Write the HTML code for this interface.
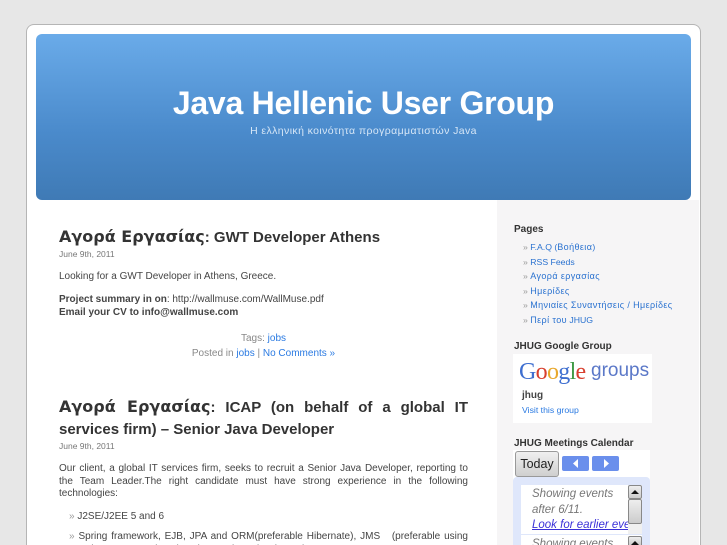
<!DOCTYPE html>
<html><head><meta charset="utf-8"><style>
html,body{margin:0;padding:0;width:727px;height:545px;overflow:hidden;background:#e7e7e7;font-family:"Liberation Sans","DejaVu Sans",sans-serif;color:#333}
a{color:#2a7ae2;text-decoration:none}
#wrap{position:relative;width:727px;height:545px;overflow:hidden;background:#e7e7e7}
.a{position:absolute;white-space:nowrap}
#page{position:absolute;left:26px;top:24px;width:673px;height:521px;background:#fff;border:1px solid #b5b5b5;border-bottom:0;border-radius:8px 8px 0 0;box-sizing:content-box;overflow:hidden}
#side{position:absolute;left:497px;top:200px;width:202px;height:345px;background:#f6f5f6}
#hdr{position:absolute;left:36px;top:34px;width:655px;height:166px;border-radius:6px;background:linear-gradient(#6aabe9,#4a8acb 60%,#3f7ab5);border-top:0}
h1{position:absolute;left:0;width:655px;top:50px;margin:0;text-align:center;color:#fff;font-size:32px;line-height:38px;font-weight:bold;letter-spacing:-.27px}
.desc{position:absolute;left:0;width:655px;top:90px;text-align:center;color:#d6e6f6;font-size:10.5px;line-height:14px;letter-spacing:.4px}
h2{position:absolute;margin:0;left:59px;width:409px;font-size:15px;line-height:22px;font-weight:bold;color:#333;text-align:justify}
.g{font-family:"DejaVu Sans",sans-serif;font-size:16px}
.date{font-size:8.5px;line-height:10px;color:#777;left:59px}
.t{font-size:10px;line-height:12px;color:#444;left:59px}
.c{left:59px;width:409px;text-align:center;font-size:10px;line-height:14px;color:#888}
.j{position:absolute;left:59px;width:409px;font-size:10px;line-height:12.5px;color:#444;text-align:justify;overflow:hidden}
.sh{font-size:10px;line-height:12px;font-weight:bold;color:#333;left:514px}
.li{font-size:8.7px;line-height:12px;left:523px;color:#999}
.li a{color:#2a72d0}
.li .e{letter-spacing:.4px;font-size:9px}
</style></head><body><div id="wrap">
<div id="page"></div>
<div id="side"></div>
<div id="hdr"><h1>Java Hellenic User Group</h1><div class="desc">Η ελληνική κοινότητα προγραμματιστών Java</div></div>

<h2 style="top:226px"><span class="g">Αγορά Εργασίας</span>: GWT Developer Athens</h2>
<div class="a date" style="top:249px">June 9th, 2011</div>
<div class="a t" style="top:271px">Looking for a GWT Developer in Athens, Greece.</div>
<div class="a t" style="top:294px"><b>Project summary in on</b>: http://wallmuse.com/WallMuse.pdf</div>
<div class="a t" style="top:307px"><b>Email your CV to info@wallmuse.com</b></div>
<div class="a c" style="top:332px">Tags: <a href="#">jobs</a></div>
<div class="a c" style="top:347px">Posted in <a href="#">jobs</a> | <a href="#">No Comments »</a></div>

<h2 style="top:396px"><span class="g">Αγορά Εργασίας</span>: ICAP (on behalf of a global IT services firm) – Senior Java Developer</h2>
<div class="a date" style="top:441px">June 9th, 2011</div>
<div class="j" style="top:463px">Our client, a global IT services firm, seeks to recruit a Senior Java Developer, reporting to the Team Leader.The right candidate must have strong experience in the following technologies:</div>
<div class="a t" style="top:511px;left:69px"><span style="color:#999">»</span> J2SE/J2EE 5 and 6</div>
<div class="j" style="top:531px;left:69px;width:399px;height:14px"><span style="color:#999">»</span> Spring framework, EJB, JPA and ORM(preferable Hibernate), JMS &nbsp; (preferable using AMQ), JTA, SOAP (WS*) and REST-based web services</div>

<div class="a sh" style="top:224px">Pages</div>
<div class="a li" style="top:241px">» <a href="#">F.A.Q (<span class="e">Βοήθεια</span>)</a></div>
<div class="a li" style="top:256px">» <a href="#">RSS Feeds</a></div>
<div class="a li" style="top:270px">» <a href="#"><span class="e">Αγορά εργασίας</span></a></div>
<div class="a li" style="top:285px">» <a href="#"><span class="e">Ημερίδες</span></a></div>
<div class="a li" style="top:299px">» <a href="#"><span class="e">Μηνιαίες Συναντήσεις / Ημερίδες</span></a></div>
<div class="a li" style="top:314px">» <a href="#"><span class="e">Περί του</span> JHUG</a></div>

<div class="a sh" style="top:341px">JHUG Google Group</div>
<div class="a" style="left:513px;top:354px;width:139px;height:69px;background:#fff"></div>
<div class="a" style="left:519px;top:354px;font-family:'Liberation Serif',serif;font-size:24px;line-height:36px;letter-spacing:-.7px"><span style="color:#3f6fd0">G</span><span style="color:#d8402f">o</span><span style="color:#e8a82c">o</span><span style="color:#3f6fd0">g</span><span style="color:#3f9a45">l</span><span style="color:#d8402f">e</span></div>
<div class="a" style="left:591px;top:359px;font-size:19px;line-height:24px;color:#5b78c8">groups</div>
<div class="a" style="left:522px;top:390px;font-size:10px;line-height:12px;font-weight:bold;color:#444">jhug</div>
<div class="a" style="left:522px;top:404px;font-size:8.7px;line-height:12px;color:#2a7ae2">Visit this group</div>

<div class="a sh" style="top:438px">JHUG Meetings Calendar</div>
<div class="a" style="left:513px;top:450px;width:137px;height:95px;background:#fff"></div>
<div class="a" style="left:515px;top:451px;width:42px;height:24px;background:linear-gradient(#f0f0f0,#cfcfcf);border:1px solid #999;border-radius:3px;font-size:12.5px;line-height:24px;text-align:center;color:#222">Today</div>
<div class="a" style="left:562px;top:456px;width:27px;height:15px;background:#6a8fec;border-radius:2px"><svg width="27" height="15" style="display:block"><path d="M16 3L11 7.5L16 12Z" fill="#fff"/></svg></div>
<div class="a" style="left:592px;top:456px;width:27px;height:15px;background:#6a8fec;border-radius:2px"><svg width="27" height="15" style="display:block"><path d="M12 3L17 7.5L12 12Z" fill="#fff"/></svg></div>
<div class="a" style="left:513px;top:477px;width:137px;height:68px;background:#dfe7fb;border-radius:4px 4px 0 0"></div>
<div class="a" style="left:521px;top:485px;width:121px;height:49px;background:#fff;overflow:hidden;font-size:11.5px;line-height:15.5px;font-style:italic;color:#777;padding:2px 0 0 11px;box-sizing:border-box">Showing events<br>after 6/11.<br><a href="#" style="color:#3a30d8;text-decoration:underline">Look for earlier eve</a></div>
<div class="a" style="left:521px;top:535px;width:121px;height:10px;background:#fff;overflow:hidden;font-size:11.5px;line-height:15.5px;font-style:italic;color:#777;padding:2px 0 0 11px;box-sizing:border-box">Showing events</div>
<div class="a" style="left:628px;top:485px;width:14px;height:14px;background:linear-gradient(#eee,#ccc);border:1px solid #888;border-radius:2px;box-sizing:border-box"><svg width="12" height="12" style="display:block"><path d="M2 8L6 4L10 8Z" fill="#111"/></svg></div>
<div class="a" style="left:628px;top:499px;width:14px;height:25px;background:linear-gradient(#eee,#ccc);border:1px solid #888;border-radius:2px;box-sizing:border-box"></div>
<div class="a" style="left:628px;top:524px;width:14px;height:10px;background:#f0f0f0"></div>
<div class="a" style="left:628px;top:536px;width:14px;height:9px;overflow:hidden;background:linear-gradient(#eee,#ccc);border:1px solid #888;border-bottom:0;border-radius:2px 2px 0 0;box-sizing:border-box"><svg width="12" height="8" style="display:block"><path d="M2 8L6 4L10 8Z" fill="#111"/></svg></div>
</div></body></html>
